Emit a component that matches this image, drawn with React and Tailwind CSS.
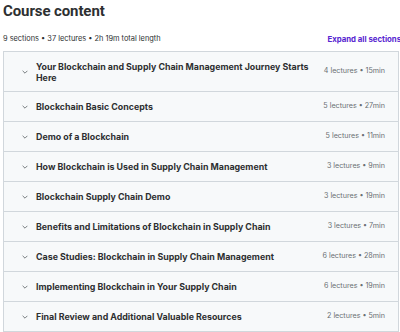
import React from "react";

const sections = [
  ["Your Blockchain and Supply Chain Management Journey Starts Here", "4 lectures • 15min"],
  ["Blockchain Basic Concepts", "5 lectures • 27min"],
  ["Demo of a Blockchain", "5 lectures • 11min"],
  ["How Blockchain is Used in Supply Chain Management", "3 lectures • 9min"],
  ["Blockchain Supply Chain Demo", "3 lectures • 19min"],
  ["Benefits and Limitations of Blockchain in Supply Chain", "3 lectures • 7min"],
  ["Case Studies: Blockchain in Supply Chain Management", "6 lectures • 28min"],
  ["Implementing Blockchain in Your Supply Chain", "6 lectures • 19min"],
  ["Final Review and Additional Valuable Resources", "2 lectures • 5min"],
];

function Chevron() {
  return (
    <svg width="6" height="4" viewBox="0 0 6 4" className="shrink-0">
      <path d="M0.6 0.8 L3 3.2 L5.4 0.8" fill="none" stroke="#6a6f73" strokeWidth="0.9" />
    </svg>
  );
}

export default function App() {
  return (
    <div className="w-[400px] h-[332px] bg-white overflow-hidden font-['Inter',sans-serif] text-[#2d2f31]">
      <div className="pl-[3px] pt-[1px] h-[22px] text-[15px] leading-[20px] font-bold font-['Roboto',sans-serif] tracking-[-0.1px]">Course content</div>
      <div className="flex items-center justify-between pl-[3px] mt-[12px] h-[10px]">
        <span className="text-[7.4px] leading-[10px] text-[#2d2f31]">9 sections • 37 lectures • 2h 19m total length</span>
        <span className="text-[7.8px] leading-[10px] font-bold text-[#5624d0] mr-[-1px]">Expand all sections</span>
      </div>
      <div className="ml-[3px] mt-[7px] w-[396px] border border-[#d1d7dc]">
        {sections.map(([t, m], i) => (
          <div
            key={i}
            className={`flex items-center bg-[#f7f9fa] pl-[18px] pr-[13px] ${i === 0 ? "h-[39px]" : "h-[30px]"} ${i > 0 ? "border-t border-[#d1d7dc]" : ""}`}
          >
            <Chevron />
            <div className="ml-[8px] w-[276px] text-[8.85px] leading-[11px] font-bold">{t}</div>
            <div className="ml-auto text-[7.15px] text-[#6a6f73] whitespace-nowrap">{m}</div>
          </div>
        ))}
      </div>
    </div>
  );
}
